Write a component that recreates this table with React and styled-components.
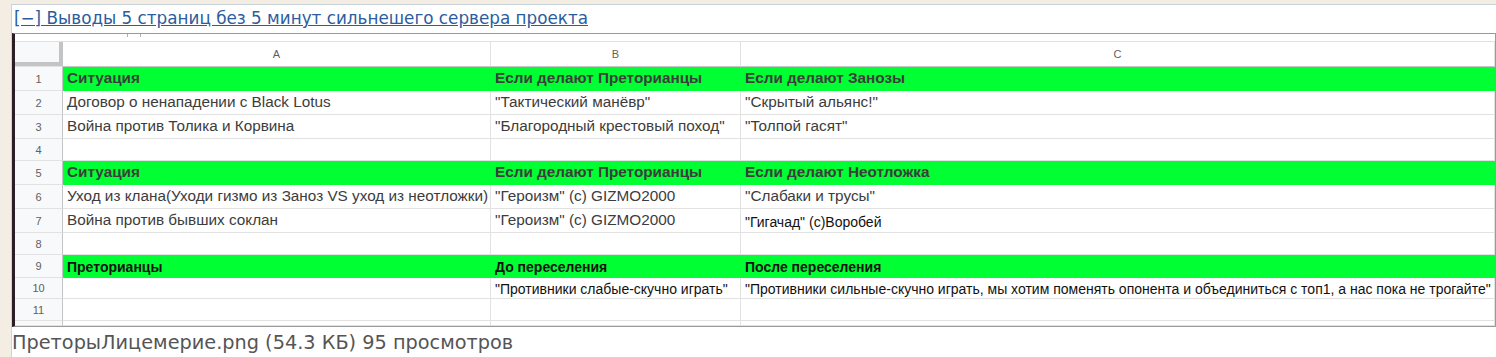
import React from 'react'
import styled, { createGlobalStyle } from 'styled-components'

const GlobalStyle = createGlobalStyle`
  html, body {
    margin: 0;
    padding: 0;
    background: #f4ede4;
  }
  body {
    padding-top: 4px;
    overflow: hidden;
  }
`

const Post = styled.div`
  margin-left: 11px;
  background: #ffffff;
  border-top: 1px solid #c8d3db;
  border-left: 1px solid #c8d3db;
  height: 360px;
`

const TitleLink = styled.a`
  display: block;
  height: 28px;
  padding-left: 2px;
  font-family: "DejaVu Sans", sans-serif;
  font-size: 16.8px;
  line-height: 27px;
  color: #2b5d9e;
  text-decoration: underline;
  white-space: nowrap;
`

const Shot = styled.div`
  width: 1480px;
  border-top: 1px solid #9a9a9a;
  border-left: 3px solid #2c1e26;
  border-right: 1px solid #9a9a9a;
  border-bottom: 1px solid #9a9a9a;
  overflow: hidden;
  background: #ffffff;
`

const TabStrip = styled.div`
  height: 7px;
  display: flex;
  gap: 12px;
  padding-left: 112px;
  border-bottom: 1px solid #e0e0e0;
`

const Tick = styled.span`
  width: 1px;
  height: 3px;
  background: #b0b0b0;
`

const Row = styled.div`
  display: grid;
  grid-template-columns: 48px 428px 250px 1fr;
  height: ${p => p.$h}px;
`

const RowHead = styled.div`
  background: #f8f9fa;
  border-right: 1px solid #c4c4c4;
  border-bottom: 1px solid #e2e2e2;
  box-shadow: ${p => (p.$corner ? 'inset -3px -4px 0 #c4c4c4' : 'none')};
  display: flex;
  align-items: center;
  justify-content: center;
  font-family: "Liberation Sans", Arial, sans-serif;
  font-size: 11px;
  color: #5f5f5f;
`

const ColHead = styled.div`
  border-right: 1px solid #e2e2e2;
  border-bottom: 1px solid #c4c4c4;
  display: flex;
  align-items: center;
  justify-content: center;
  font-family: "Liberation Sans", Arial, sans-serif;
  font-size: 11px;
  color: #5f5f5f;
`

const Cell = styled.div`
  background: ${p => (p.$green ? '#00ff33' : '#ffffff')};
  border-right: 1px solid ${p => (p.$green ? '#00ff33' : '#e2e2e2')};
  border-bottom: 1px solid ${p => (p.$green ? '#00ff33' : '#e2e2e2')};
  display: flex;
  align-items: center;
  padding: 0 0 1px 4px;
  white-space: nowrap;
  font-family: "Liberation Sans", Arial, sans-serif;
  font-size: ${p => (p.$small ? 14 : 15.3)}px;
  font-weight: ${p => (p.$bold ? 700 : 400)};
  color: ${p => (p.$small ? '#111111' : '#3c3c3c')};
  padding-top: ${p => (p.$small ? 3 : 0)}px;
`

const Caption = styled.div`
  padding: 4px 0 0 0;
  font-family: "DejaVu Sans", sans-serif;
  font-size: 19.3px;
  color: #555555;
  white-space: nowrap;
`

const rows = [
  { n: 1, h: 24, green: true, bold: true, cells: ['Ситуация', 'Если делают Преторианцы', 'Если делают Занозы'] },
  { n: 2, h: 24, cells: ['Договор о ненападении с Black Lotus', '"Тактический манёвр"', '"Скрытый альянс!"'] },
  { n: 3, h: 24, cells: ['Война против Толика и Корвина', '"Благородный крестовый поход"', '"Толпой гасят"'] },
  { n: 4, h: 22, cells: ['', '', ''] },
  { n: 5, h: 24, green: true, bold: true, cells: ['Ситуация', 'Если делают Преторианцы', 'Если делают Неотложка'] },
  { n: 6, h: 24, cells: ['Уход из клана(Уходи гизмо из Заноз VS уход из неотложки)', '"Героизм" (c) GIZMO2000', '"Слабаки и трусы"'] },
  { n: 7, h: 24, smallLast: true, cells: ['Война против бывших соклан', '"Героизм" (c) GIZMO2000', '"Гигачад" (c)Воробей'] },
  { n: 8, h: 22, cells: ['', '', ''] },
  { n: 9, h: 23, green: true, bold: true, small: true, cells: ['Преторианцы', 'До переселения', 'После переселения'] },
  { n: 10, h: 21, small: true, cells: ['', '"Противники слабые-скучно играть"', '"Противники сильные-скучно играть, мы хотим поменять опонента и объединиться с топ1, а нас пока не трогайте"'] },
  { n: 11, h: 22, cells: ['', '', ''] },
  { n: '', h: 5, cells: ['', '', ''] },
]

export default function App() {
  return (
    <>
      <GlobalStyle />
      <Post>
        <TitleLink href="#">[−] Выводы 5 страниц без 5 минут сильнешего сервера проекта</TitleLink>
        <Shot>
          <TabStrip>
            <Tick />
            <Tick />
          </TabStrip>
          <Row $h={25}>
            <RowHead $corner />
            <ColHead>A</ColHead>
            <ColHead>B</ColHead>
            <ColHead>C</ColHead>
          </Row>
          {rows.map((r, i) => (
            <Row key={i} $h={r.h}>
              <RowHead>{r.n}</RowHead>
              {r.cells.map((c, j) => (
                <Cell
                  key={j}
                  $green={r.green}
                  $bold={r.bold}
                  $small={r.small || (r.smallLast && j === 2)}
                >
                  {c}
                </Cell>
              ))}
            </Row>
          ))}
        </Shot>
        <Caption>ПреторыЛицемерие.png (54.3 КБ) 95 просмотров</Caption>
      </Post>
    </>
  )
}
